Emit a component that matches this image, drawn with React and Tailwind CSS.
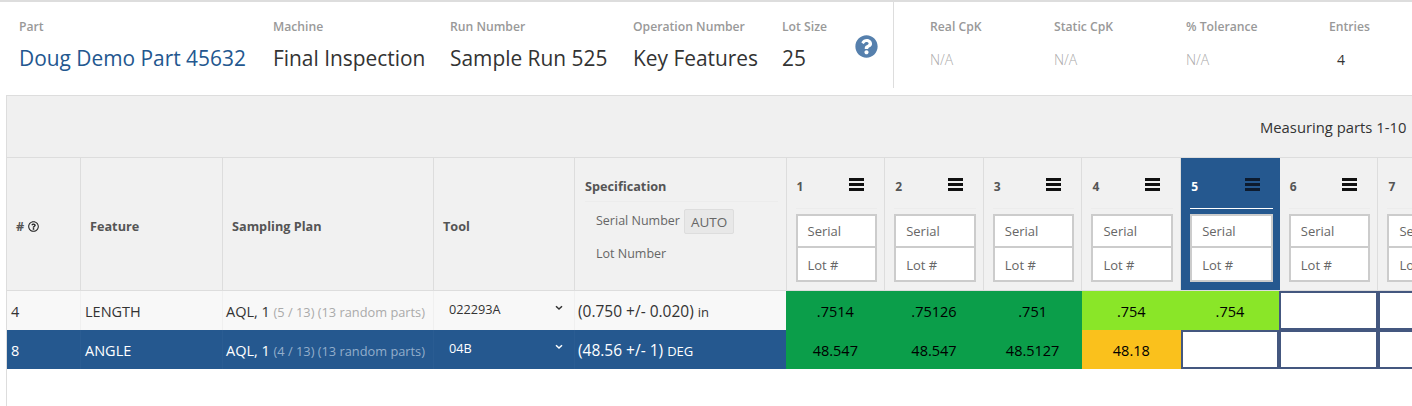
import { FaQuestionCircle, FaRegQuestionCircle } from 'react-icons/fa';

const stats = [
  { label: 'Part', value: 'Doug Demo Part 45632', width: 'w-[254px]', color: 'text-[#23578f]' },
  { label: 'Machine', value: 'Final Inspection', width: 'w-[177px]', color: 'text-[#333]' },
  { label: 'Run Number', value: 'Sample Run 525', width: 'w-[183px]', color: 'text-[#333]' },
  { label: 'Operation Number', value: 'Key Features', width: 'w-[149px]', color: 'text-[#333]' },
  { label: 'Lot Size', value: '25', width: 'w-[73px]', color: 'text-[#333]' },
];

const capability = [
  { label: 'Real CpK', value: 'N/A', width: 'w-[124px]', color: 'text-[#aaa] font-light' },
  { label: 'Static CpK', value: 'N/A', width: 'w-[132px]', color: 'text-[#aaa] font-light' },
  { label: '% Tolerance', value: 'N/A', width: 'w-[143px]', color: 'text-[#aaa] font-light' },
  { label: 'Entries', value: '4', width: 'w-[60px] pl-[8px]', color: 'text-[#333]', labelPad: '-ml-[8px]' },
];

const GREEN = 'bg-[#0b9e4a]';
const LIME = 'bg-[#8ae628]';
const AMBER = 'bg-[#fac11c]';

const rows = [
  {
    id: '4',
    feature: 'LENGTH',
    count: '(5 / 13) (13 random parts)',
    tool: '022293A',
    spec: '(0.750 +/- 0.020)',
    unit: 'in',
    selected: false,
    cells: [
      { v: '.7514', c: GREEN },
      { v: '.75126', c: GREEN },
      { v: '.751', c: GREEN },
      { v: '.754', c: LIME },
      { v: '.754', c: LIME },
      {},
      {},
    ],
  },
  {
    id: '8',
    feature: 'ANGLE',
    count: '(4 / 13) (13 random parts)',
    tool: '04B',
    spec: '(48.56 +/- 1)',
    unit: 'DEG',
    selected: true,
    cells: [
      { v: '48.547', c: GREEN },
      { v: '48.547', c: GREEN },
      { v: '48.5127', c: GREEN },
      { v: '48.18', c: AMBER },
      {},
      {},
      {},
    ],
  },
];

function Hamburger({ dark }) {
  return (
    <svg width="15" height="13" viewBox="0 0 15 13" className={dark ? 'text-[#0d1b2e]' : 'text-[#111]'}>
      <rect x="0" y="0" width="15" height="3" fill="currentColor" />
      <rect x="0" y="5" width="15" height="3" fill="currentColor" />
      <rect x="0" y="10" width="15" height="3" fill="currentColor" />
    </svg>
  );
}

function Chevron() {
  return (
    <svg width="8" height="6" viewBox="0 0 8 6" className="mt-[-5px]">
      <path d="M1 1.2 L4 4 L7 1.2" fill="none" stroke="currentColor" strokeWidth="1.5" />
    </svg>
  );
}

function Stat({ item }) {
  return (
    <div className={`shrink-0 ${item.width}`}>
      <div className="text-[12.2px] leading-[18px] font-semibold text-[#999]">{item.label}</div>
      <div className={`mt-[7px] text-[20.9px] leading-[30px] ${item.color}`}>{item.value}</div>
    </div>
  );
}

function Capability({ item }) {
  return (
    <div className={`shrink-0 ${item.width}`}>
      <div className={`text-[12.2px] leading-[18px] font-semibold text-[#999] ${item.labelPad || ''}`}>{item.label}</div>
      <div className={`mt-[14px] text-[14px] leading-[20px] ${item.color}`}>{item.value}</div>
    </div>
  );
}

function PartHeader({ n, selected }) {
  return (
    <div className={`w-[98.67px] shrink-0 pt-[19px] ${selected ? 'bg-[#25588f]' : 'border-r border-[#ddd]'}`}>
      <div className={`ml-[9px] mr-[7px] h-[32px] border-b flex justify-between pl-[1px] pr-[13px] ${selected ? 'border-white' : 'border-[#ececec]'}`}>
        <span className={`text-[12px] leading-[20px] font-bold ${selected ? 'text-white' : 'text-[#555]'}`}>{n}</span>
        <span className="pt-[1px]"><Hamburger dark={selected} /></span>
      </div>
      <div className="ml-[9px] mr-[7px] mt-[5px] bg-white border-2 border-[#ccc] text-[13px] font-normal text-[#666]">
        <div className="h-[32px] pl-[10px] leading-[30px] border-b-2 border-[#ccc]">Serial</div>
        <div className="h-[32px] pl-[10px] leading-[34px]">Lot #</div>
      </div>
    </div>
  );
}

function Row({ row }) {
  const sel = row.selected;
  const base = sel ? 'bg-[#25588f] text-white' : 'bg-[#f8f8f8] text-[#333]';
  const edge = sel ? 'border-r border-[#2a5c92]' : 'border-r border-[#f0f0f0]';
  const muted = sel ? 'text-[#93aecb]' : 'text-[#aaa]';
  return (
    <div className={`flex h-[39px] text-[14.5px] leading-[41px] ${base}`}>
      <div className={`w-[74px] shrink-0 pl-[4px] ${edge}`}>{row.id}</div>
      <div className={`w-[142px] shrink-0 pl-[4px] ${edge}`}>{row.feature}</div>
      <div className={`w-[211px] shrink-0 pl-[3px] whitespace-nowrap ${edge}`}>
        AQL, 1 <span className={`text-[12.8px] ${muted}`}>{row.count}</span>
      </div>
      <div className={`w-[141px] shrink-0 pl-[15px] pr-[11px] flex items-center justify-between text-[12.7px] ${edge}`}>
        <span className="mt-[-3px]">{row.tool}</span>
        <Chevron />
      </div>
      <div className="w-[211px] shrink-0 pl-[3px] whitespace-nowrap text-[15.5px]">
        {row.spec} <span className="text-[13px]">{row.unit}</span>
      </div>
      {row.cells.map((cell, i) =>
        cell.v ? (
          <div key={i} className={`w-[98.67px] shrink-0 text-center text-black ${cell.c}`}>{cell.v}</div>
        ) : (
          <div key={i} className="w-[98.67px] shrink-0 bg-white border-2 border-[#44577f]" />
        ),
      )}
    </div>
  );
}

export default function App() {
  return (
    <div className="w-[1412px] h-[406px] overflow-hidden bg-white font-['Open_Sans',sans-serif] border-t-[2px] border-[#ddd]">
      <div className="flex h-[93px] pl-[19px]">
        <div className="flex pt-[16px]">
          {stats.map((item) => (
            <Stat key={item.label} item={item} />
          ))}
        </div>
        <div className="pt-[33px] shrink-0 w-[38px] text-[#5680ad]">
          <FaQuestionCircle size={23} />
        </div>
        <div className="h-[86px] border-l border-[#ddd] pl-[36px] flex pt-[16px]">
          {capability.map((item) => (
            <Capability key={item.label} item={item} />
          ))}
        </div>
      </div>

      <div className="ml-[6px] h-[311px] border-l border-t border-[#ddd]">
        <div className="h-[61px] bg-[#f0f0f0] flex items-center pl-[1253px] whitespace-nowrap text-[14.8px] text-[#333] pt-[2px]">
          Measuring parts 1-10
        </div>
        <div className="flex h-[134px] bg-[#f1f1f1] border-y border-[#ddd] text-[12.7px] font-bold text-[#555]">
          <div className="w-[74px] shrink-0 border-r border-[#ddd] pl-[9px] pt-[5px] flex items-center gap-[4px]">
            # <FaRegQuestionCircle size={11} className="text-[#222]" />
          </div>
          <div className="w-[142px] shrink-0 border-r border-[#ddd] pl-[9px] pt-[5px] flex items-center">Feature</div>
          <div className="w-[211px] shrink-0 border-r border-[#ddd] pl-[9px] pt-[5px] flex items-center">Sampling Plan</div>
          <div className="w-[141px] shrink-0 border-r border-[#ddd] pl-[9px] pt-[5px] flex items-center">Tool</div>
          <div className="w-[211.5px] shrink-0 border-r border-[#ddd] pl-[10px] pt-[18px]">
            <div className="h-[26px] border-b border-[#ececec] mr-[8px] leading-[20px]">Specification</div>
            <div className="pl-[11px] font-normal text-[12.5px] text-[#666] flex items-center mt-[6px] h-[26px] whitespace-nowrap">
              Serial Number
              <span className="ml-[4px] px-[6px] h-[25px] leading-[24px] text-[13.5px] bg-[#e8e8e8] border border-[#ddd] rounded-[2px]">AUTO</span>
            </div>
            <div className="pl-[11px] font-normal text-[12.5px] text-[#666] mt-[10px] leading-[20px]">Lot Number</div>
          </div>
          {[1, 2, 3, 4, 5, 6, 7].map((n) => (
            <PartHeader key={n} n={n} selected={n === 5} />
          ))}
        </div>
        {rows.map((row) => (
          <Row key={row.id} row={row} />
        ))}
      </div>
    </div>
  );
}
